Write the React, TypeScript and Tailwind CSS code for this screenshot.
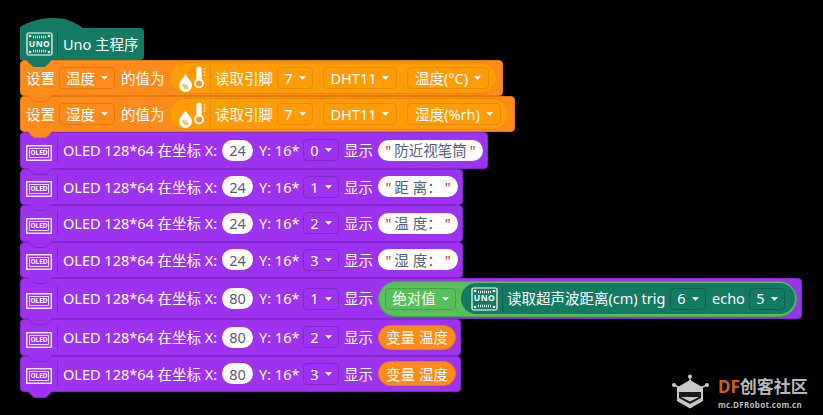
const font = { fontFamily: '"Noto Sans", "Noto Sans CJK SC", sans-serif' };

type Tone = "orange" | "purple" | "amber" | "green" | "teal";

const ddBorder: Record<Tone, string> = {
  orange: "border-[#e57a10]",
  purple: "border-[#8329cc]",
  amber: "border-[#e58e06]",
  green: "border-[#45a449]",
  teal: "border-[#115f4e]",
};

const Caret = () => (
  <svg width="7" height="4" viewBox="0 0 7 4" className="shrink-0">
    <path d="M0.5 0.5h6L3.5 3.5z" fill="#fff" stroke="#fff" strokeWidth="0.6" strokeLinejoin="round" />
  </svg>
);

const Dropdown = ({ label, tone, w }: { label: string; tone: Tone; w: string }) => (
  <span className={`flex h-[22px] shrink-0 items-center justify-center gap-[6px] rounded-[4px] border ${ddBorder[tone]} ${w}`}>
    <span>{label}</span>
    <Caret />
  </span>
);

const Num = ({ v }: { v: string }) => (
  <span className="flex h-[21px] w-[31px] shrink-0 items-center justify-center rounded-full bg-white text-[#575e75]">{v}</span>
);

const Str = ({ v, w }: { v: string; w: string }) => (
  <span className={`flex h-[21px] shrink-0 items-center justify-center gap-[3px] whitespace-pre rounded-full bg-white text-[#575e75] ${w}`}>
    <span className="text-[#c0392b]">"</span>
    {v}
    <span className="text-[#c0392b]">"</span>
  </span>
);

const Notch = ({ fill, stroke, top }: { fill: string; stroke: string; top: string }) => (
  <svg width="26" height="7" viewBox="0 0 26 7" className={`absolute left-[6px] z-10 ${top}`}>
    <path d="M0.5 0L6 5.5Q7 6.5 8.5 6.5H17.5Q19 6.5 20 5.5L25.5 0" fill={fill} stroke={stroke} />
  </svg>
);

const UnoIcon = () => (
  <span className="relative flex h-[26px] w-[27px] shrink-0 items-center justify-center">
    <svg width="27" height="26" viewBox="0 0 27 26" className="absolute inset-0">
      <rect x="1" y="2" width="25" height="22" rx="1.5" fill="none" stroke="#fff" strokeWidth="1.2" />
      <path d="M7 6h13M7 20h13" stroke="#fff" strokeWidth="2.4" strokeDasharray="1 1" fill="none" />
      <circle cx="4" cy="5" r="1.3" fill="#fff" />
      <circle cx="23" cy="5" r="1.3" fill="#fff" />
      <circle cx="4" cy="21" r="1.3" fill="#fff" />
      <circle cx="23" cy="21" r="1.3" fill="#fff" />
    </svg>
    <span className="relative text-[8.5px] font-bold leading-none tracking-[0.5px]">UNO</span>
  </span>
);

const OledIcon = () => (
  <span className="relative mt-[5px] flex h-[16px] w-[26px] shrink-0 items-center justify-center">
    <svg width="26" height="16" viewBox="0 0 26 16" className="absolute inset-0">
      <rect x="0.75" y="0.75" width="24.5" height="14.5" fill="none" stroke="#fff" strokeWidth="1.3" />
      <rect x="3.5" y="3.5" width="19" height="9" fill="none" stroke="#fff" strokeWidth="0.8" />
    </svg>
    <span className="relative text-[6.5px] font-bold leading-none">OLED</span>
  </span>
);

const DhtIcon = () => (
  <svg width="30" height="30" viewBox="0 0 30 30" className="shrink-0">
    <path d="M6.5 11C4 16 0 18 0 22.5a6.5 6.5 0 0 0 13 0C13 18 9 16 6.5 11z" fill="#fff" />
    <text x="6.5" y="25.5" textAnchor="middle" fontSize="6.5" fontWeight="700" fill="#ff9c08">%</text>
    <path d="M20 3.5a2.6 2.6 0 0 1 2.6 2.6v10a5 5 0 1 1-5.2 0V6.1A2.6 2.6 0 0 1 20 3.5z" fill="#fff" />
    <circle cx="20" cy="20.5" r="3" fill="#ff9c08" />
    <path d="M24.5 6h2M24.5 9h2M24.5 12h2" stroke="#fff" strokeWidth="1" />
  </svg>
);

const Divider = ({ color, h = "h-[26px]" }: { color: string; h?: string }) => (
  <span className={`block w-px shrink-0 ${h} ${color}`} />
);

const SetRow = ({ name, prop, propW, pillW, w }: { name: string; prop: string; propW: string; pillW: string; w: string }) => (
  <div className={`relative flex h-[36px] shrink-0 items-center rounded-[4px] border border-[#e57a10] bg-[#ff8c1a] pl-[5px] ${w}`}>
    <span className="w-[28px] shrink-0 whitespace-nowrap">设置</span>
    <span className="ml-[5px]"><Dropdown label={name} tone="orange" w="w-[56px]" /></span>
    <span className="ml-[6px] w-[42px] shrink-0 whitespace-nowrap">的值为</span>
    <span className={`ml-[6px] flex h-[32px] shrink-0 items-center rounded-full border border-[#e58e06] bg-[#ff9c08] pl-[9px] ${pillW}`}>
      <DhtIcon />
      <span className="ml-[1px]"><Divider color="bg-[#e58e06]" /></span>
      <span className="ml-[4px] w-[56px] shrink-0 whitespace-nowrap">读取引脚</span>
      <span className="ml-[6px]"><Dropdown label="7" tone="amber" w="w-[36px]" /></span>
      <span className="ml-[10px]"><Dropdown label="DHT11" tone="amber" w="w-[74px]" /></span>
      <span className="ml-[10px]"><Dropdown label={prop} tone="amber" w={propW} /></span>
    </span>
    <Notch fill="#ff8c1a" stroke="#e57a10" top="top-[34px]" />
  </div>
);

const OledRow = ({
  x,
  line,
  w,
  tall = false,
  children,
}: {
  x: string;
  line: string;
  w: string;
  tall?: boolean;
  children: React.ReactNode;
}) => (
  <div className={`relative flex shrink-0 items-center rounded-[4px] border border-[#8329cc] bg-[#9d33f0] pl-[5px] ${tall ? "h-[41px]" : "h-[36.5px]"} ${w}`}>
    <OledIcon />
    <span className="ml-[5px]"><Divider color="bg-[#8329cc]" /></span>
    <span className="ml-[5px] w-[154px] shrink-0 whitespace-nowrap">OLED 128*64 在坐标 X:</span>
    <span className="ml-[5px]"><Num v={x} /></span>
    <span className="ml-[6px] w-[38px] shrink-0 whitespace-nowrap">Y: 16*</span>
    <span className="ml-[6px]"><Dropdown label={line} tone="purple" w="w-[36px]" /></span>
    <span className="ml-[5px] w-[29px] shrink-0 whitespace-nowrap">显示</span>
    <span className="ml-[5px] flex items-center">{children}</span>
    <Notch fill="#9d33f0" stroke="#8329cc" top={tall ? "top-[39px]" : "top-[34.5px]"} />
  </div>
);

const VarPill = ({ label }: { label: string }) => (
  <span className="flex h-[25px] w-[78px] shrink-0 items-center justify-center whitespace-nowrap rounded-full border border-[#e57a10] bg-[#ff8c1a]">{label}</span>
);

const Logo = () => (
  <div className="absolute left-[672px] top-[374px] flex items-start gap-[9px]">
    <svg width="37" height="36" viewBox="0 0 37 36" className="shrink-0">
      <path d="M18 3V9M2 11L8 14M35 11L28 14" stroke="#c9c9c9" strokeWidth="1.5" />
      <circle cx="18" cy="2.5" r="2" fill="#c9c9c9" />
      <circle cx="2" cy="11" r="2" fill="#c9c9c9" />
      <circle cx="35" cy="11" r="2" fill="#c9c9c9" />
      <path d="M18 6L31 13.5V27L18 34.5L5 27V13.5z" fill="#c9c9c9" />
      <path d="M7 18H29V24L18 30L7 24z" fill="#1a1a1a" />
      <path d="M9 23H27L18 27.5z" fill="#c9c9c9" />
    </svg>
    <div className="flex flex-col items-start">
      <span className="mt-[2px] h-[22px] whitespace-nowrap text-[17px] font-bold leading-[22px]">
        <span className="text-[#c9601f]">DF</span>
        <span className="text-[#b9b9b9]">创客社区</span>
      </span>
      <span className="mt-[1px] whitespace-nowrap text-[8px] font-bold leading-[12px] tracking-[0.3px] text-[#b9b9b9]">mc.DFRobot.com.cn</span>
    </div>
  </div>
);

export default function App() {
  return (
    <div style={font} className="relative flex h-[415px] w-[823px] flex-col items-start overflow-hidden bg-black pl-[20px] pt-[28px] text-[14.5px] leading-none text-white">
      {/* 主程序 hat */}
      <div className="relative flex h-[32px] w-[124px] shrink-0 items-center rounded-r-[4px] bg-[#137a63] pl-[6px]">
        <svg width="66" height="11" viewBox="0 0 66 11" className="absolute -top-[10px] left-0">
          <path d="M0 11V9C10 3 22 0 33 0S54 3 64 11z" fill="#137a63" />
        </svg>
        <UnoIcon />
        <span className="ml-[4px]"><Divider color="bg-[#115f4e]" /></span>
        <span className="ml-[5px] whitespace-nowrap">Uno 主程序</span>
        <Notch fill="#137a63" stroke="#137a63" top="top-[32px]" />
      </div>

      <SetRow name="温度" prop="温度(°C)" propW="w-[82px]" pillW="w-[328px]" w="w-[483px]" />
      <SetRow name="湿度" prop="湿度(%rh)" propW="w-[94px]" pillW="w-[340px]" w="w-[495px]" />

      <OledRow x="24" line="0" w="w-[468px]"><Str v="防近视笔筒" w="w-[105px]" /></OledRow>
      <OledRow x="24" line="1" w="w-[443px]"><Str v="距 离：" w="w-[80px]" /></OledRow>
      <OledRow x="24" line="2" w="w-[443px]"><Str v="温 度：" w="w-[80px]" /></OledRow>
      <OledRow x="24" line="3" w="w-[443px]"><Str v="湿 度：" w="w-[80px]" /></OledRow>
      <OledRow x="80" line="1" w="w-[782px]" tall>
        <span className="flex h-[36px] w-[419px] shrink-0 items-center rounded-full border border-[#45a449] bg-[#59c059] pl-[6px]">
          <Dropdown label="绝对值" tone="green" w="w-[71px]" />
          <span className="ml-[5px] flex h-[31px] w-[334px] shrink-0 items-center rounded-full bg-[#137a63] pl-[10px]">
            <UnoIcon />
            <span className="ml-[4px]"><Divider color="bg-[#115f4e]" /></span>
            <span className="ml-[4px] w-[157px] shrink-0 whitespace-nowrap">读取超声波距离(cm) trig</span>
            <span className="ml-[6px]"><Dropdown label="6" tone="teal" w="w-[36px]" /></span>
            <span className="ml-[6px] w-[32px] shrink-0">echo</span>
            <span className="ml-[5px]"><Dropdown label="5" tone="teal" w="w-[36px]" /></span>
          </span>
        </span>
      </OledRow>
      <OledRow x="80" line="2" w="w-[441px]"><VarPill label="变量 温度" /></OledRow>
      <OledRow x="80" line="3" w="w-[441px]"><VarPill label="变量 湿度" /></OledRow>

      <Logo />
    </div>
  );
}
